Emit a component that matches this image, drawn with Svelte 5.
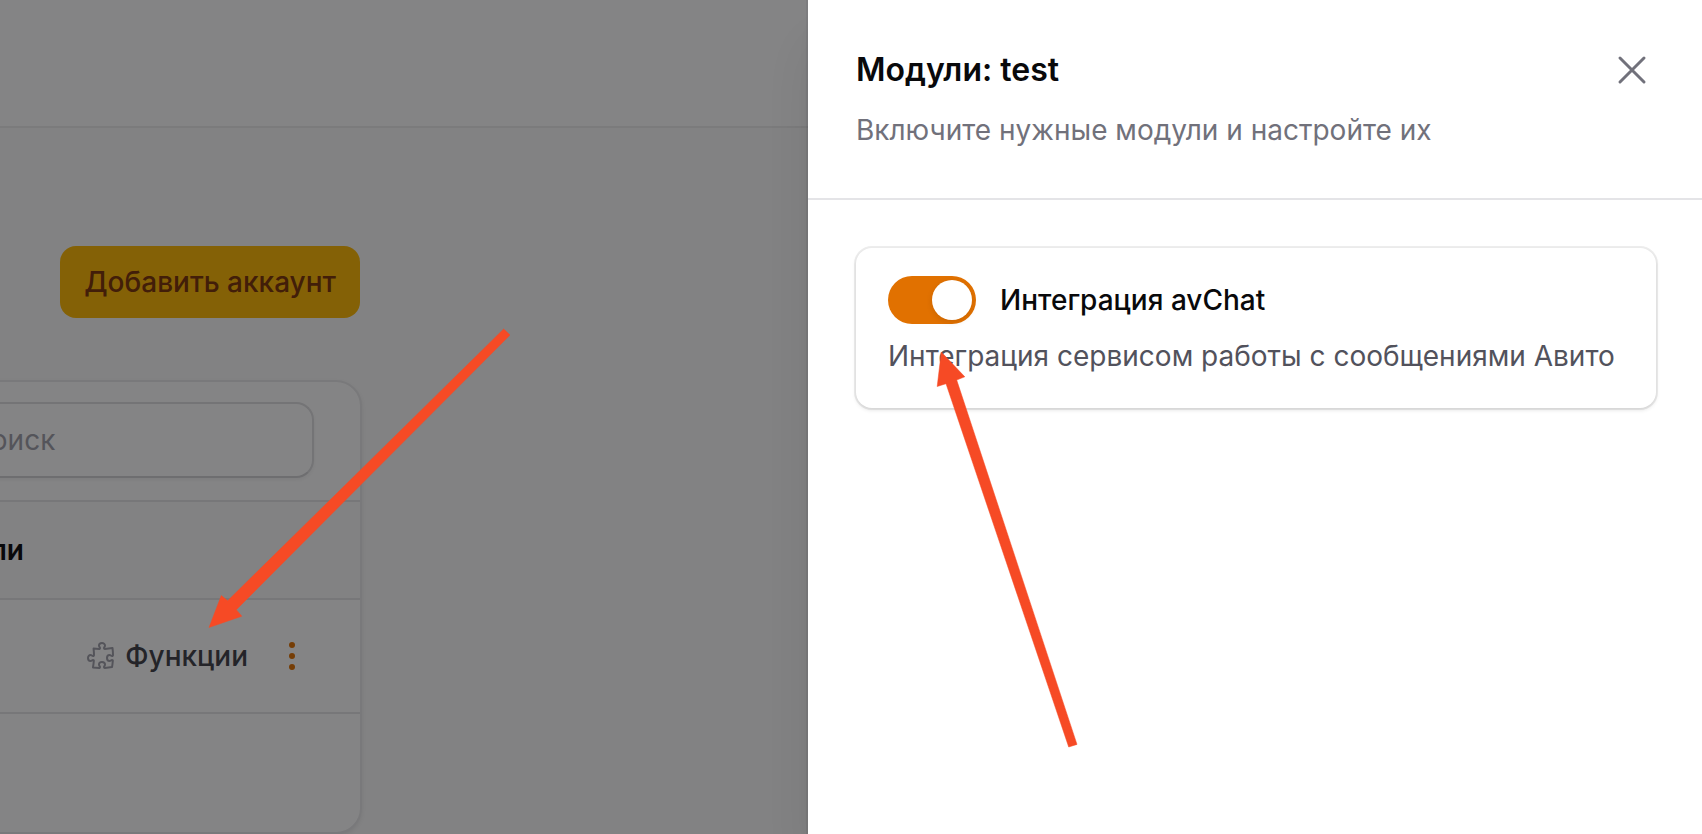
<script>
  let enabled = $state(true);
</script>

<div class="screen">
  <div class="page">
    <header class="topbar"></header>
    <main class="content">
      <div class="actions">
        <button class="primary" type="button">Добавить аккаунт</button>
      </div>
      <section class="table-card">
        <div class="toolbar">
          <input class="search" type="search" placeholder="Поиск" aria-label="Поиск" />
        </div>
        <table>
          <thead>
            <tr>
              <th class="modules" scope="col">Модули</th>
              <td></td>
            </tr>
          </thead>
          <tbody>
            <tr>
              <td></td>
              <td>
                <div class="row-actions">
                  <button class="functions" type="button">
                    <svg class="puzzle" viewBox="0 0 24 24" aria-hidden="true">
                      <path d="M14.25 6.087c0-.355.186-.676.401-.959.221-.29.349-.634.349-1.003 0-1.036-1.007-1.875-2.25-1.875s-2.25.84-2.25 1.875c0 .369.128.713.349 1.003.215.283.401.604.401.959v0a.64.64 0 0 1-.657.643 48.39 48.39 0 0 1-4.163-.3c.186 1.613.293 3.25.315 4.907a.656.656 0 0 1-.658.663v0c-.355 0-.676-.186-.959-.401a1.647 1.647 0 0 0-1.003-.349c-1.036 0-1.875 1.007-1.875 2.25s.84 2.25 1.875 2.25c.369 0 .713-.128 1.003-.349.283-.215.604-.401.959-.401v0c.31 0 .555.26.532.57a48.039 48.039 0 0 1-.642 5.056c1.518.19 3.058.309 4.616.354a.64.64 0 0 0 .657-.643v0c0-.355-.186-.676-.401-.959a1.647 1.647 0 0 1-.349-1.003c0-1.035 1.008-1.875 2.25-1.875 1.243 0 2.25.84 2.25 1.875 0 .369-.128.713-.349 1.003-.215.283-.4.604-.4.959v0c0 .333.277.599.61.58a48.1 48.1 0 0 0 5.427-.63 48.05 48.05 0 0 0 .582-4.717.532.532 0 0 0-.533-.57v0c-.355 0-.676.186-.959.401-.29.221-.634.349-1.003.349-1.035 0-1.875-1.007-1.875-2.25s.84-2.25 1.875-2.25c.37 0 .713.128 1.003.349.283.215.604.401.96.401v0a.656.656 0 0 0 .658-.663 48.422 48.422 0 0 0-.37-5.36c-1.886.342-3.81.574-5.766.689a.578.578 0 0 1-.61-.58v0Z" />
                    </svg>
                    Функции
                  </button>
                  <button class="more" type="button" aria-label="Ещё">
                    <svg viewBox="0 0 20 20" aria-hidden="true">
                      <circle cx="10" cy="4.5" r="1.5" />
                      <circle cx="10" cy="10" r="1.5" />
                      <circle cx="10" cy="15.5" r="1.5" />
                    </svg>
                  </button>
                </div>
              </td>
            </tr>
          </tbody>
        </table>
        <div class="table-footer"></div>
      </section>
    </main>
  </div>

  <div class="backdrop"></div>

  <aside class="drawer" aria-labelledby="drawer-title">
    <header class="drawer-header">
      <div class="heading">
        <h2 id="drawer-title">Модули: test</h2>
        <button class="close" type="button" aria-label="Закрыть">
          <svg viewBox="0 0 24 24" aria-hidden="true"><path d="M6 18 18 6M6 6l12 12" /></svg>
        </button>
      </div>
      <p>Включите нужные модули и настройте их</p>
    </header>
    <div class="drawer-body">
      <section class="module">
        <label class="module-title">
          <input class="toggle" type="checkbox" role="switch" bind:checked={enabled} />
          Интеграция avChat
        </label>
        <p>Интеграция сервисом работы с сообщениями Авито</p>
      </section>
    </div>
  </aside>

  <svg class="arrows" width="1702" height="834" aria-hidden="true">
    <path d="M209 627.5 221.3 595.5 227.7 600.7 503.7 329 510 335 236.3 609.7 241.8 616.2Z" />
    <path d="M941.3 352 937.2 386.5 946 383.7 1068.7 747 1077 744.4 956.7 380 964.8 376.8Z" />
  </svg>
</div>

<style>
  :global(body) {
    margin: 0;
  }

  .screen {
    position: relative;
    min-height: 100vh;
    overflow: hidden;
    background: #fafafa;
    color: #09090b;
    font: 400 28px/40px Inter, "Noto Sans", sans-serif;
  }

  .screen *,
  .screen *::before {
    box-sizing: border-box;
  }

  button {
    margin: 0;
    padding: 0;
    border: 0;
    background: none;
    font: inherit;
    cursor: pointer;
  }

  h2,
  p {
    margin: 0;
  }

  svg {
    display: block;
  }

  .topbar {
    height: 128px;
    background: #fff;
    border-bottom: 2px solid #ececed;
  }

  /* The list is scrolled sideways, so its left part lies past the window edge. */
  .content {
    width: 562px;
    margin-left: -200px;
    padding-top: 118px;
  }

  .actions {
    display: flex;
    justify-content: flex-end;
    padding-right: 2px;
    margin-bottom: 62px;
  }

  .primary {
    padding: 16px 24px;
    border-radius: 16px;
    background: #ffb900;
    color: #7b3306;
    font-weight: 500;
  }

  .table-card {
    border: 2px solid #e9e9ea;
    border-radius: 26px;
    background: #fff;
    background-clip: padding-box;
    box-shadow: 0 2px 4px rgb(0 0 0 / 8%);
    overflow: hidden;
  }

  .toolbar {
    display: flex;
    justify-content: flex-end;
    padding: 20px 46px 22px;
  }

  .search {
    width: 360px;
    height: 76px;
    padding: 0 24px 0 14px;
    border: 2px solid #dedee0;
    border-bottom-color: #d2d2d5;
    border-radius: 18px;
    outline: 0;
    appearance: none;
    background: #fff;
    box-shadow: 0 2px 4px rgb(0 0 0 / 6%);
    font: inherit;
  }

  .search::placeholder {
    color: #9f9fa9;
    opacity: 1;
  }

  table {
    width: 100%;
    border-collapse: separate;
    border-spacing: 0;
  }

  th,
  td {
    padding: 0;
    border-top: 2px solid #e4e4e7;
  }

  thead tr {
    height: 98px;
    background: #fafafa;
  }

  tbody tr {
    height: 114px;
  }

  .modules {
    width: 222px;
    text-align: right;
    font-weight: 600;
  }

  .row-actions {
    display: flex;
    justify-content: flex-end;
    align-items: center;
    gap: 24px;
    padding-right: 48px;
  }

  .functions {
    display: flex;
    align-items: center;
    gap: 8px;
    color: #3f3f46;
    font-weight: 500;
  }

  .puzzle {
    width: 32px;
    height: 32px;
    fill: none;
    stroke: #9f9fa9;
    stroke-width: 1.5;
    stroke-linecap: round;
    stroke-linejoin: round;
  }

  .more svg {
    width: 40px;
    height: 40px;
    fill: #e17100;
  }

  .table-footer {
    height: 120px;
    border-top: 2px solid #e4e4e7;
  }

  .backdrop {
    position: absolute;
    inset: 0;
    background: rgb(9 9 11 / 50%);
  }

  .drawer {
    position: absolute;
    inset: 0 0 0 auto;
    width: 894px;
    max-width: 100%;
    background: #fff;
    box-shadow:
      0 0 0 2px rgb(9 9 11 / 5%),
      0 40px 50px -10px rgb(0 0 0 / 10%),
      0 16px 20px -12px rgb(0 0 0 / 10%);
  }

  .drawer-header {
    padding: 46px 46px 48px 48px;
    border-bottom: 2px solid #e4e4e7;
    color: #71717b;
  }

  .heading {
    display: flex;
    align-items: center;
    justify-content: space-between;
    margin-bottom: 16px;
  }

  h2 {
    color: #09090b;
    font-size: 32px;
    font-weight: 600;
    line-height: 48px;
  }

  .close svg {
    width: 48px;
    height: 48px;
    fill: none;
    stroke: #71717b;
    stroke-width: 1.5;
    stroke-linecap: round;
  }

  .drawer-body {
    padding: 48px 46px 48px 48px;
  }

  .module {
    padding: 28px 32px;
    border-radius: 16px;
    box-shadow:
      0 0 0 2px rgb(9 9 11 / 7%),
      0 2px 4px rgb(0 0 0 / 12%);
    line-height: 48px;
  }

  .module p {
    color: #52525c;
    white-space: nowrap;
  }

  .module-title {
    display: flex;
    align-items: center;
    gap: 24px;
    margin-bottom: 8px;
    font-weight: 500;
  }

  .toggle {
    flex: none;
    width: 88px;
    height: 48px;
    margin: 0;
    padding: 4px;
    border-radius: 24px;
    appearance: none;
    background: #e4e4e7;
    cursor: pointer;
  }

  .toggle::before {
    content: "";
    display: block;
    width: 40px;
    height: 40px;
    border-radius: 50%;
    background: #fff;
    box-shadow: 0 2px 6px rgb(0 0 0 / 10%);
  }

  .toggle:checked {
    background: #e17100;
  }

  .toggle:checked::before {
    margin-left: auto;
  }

  .arrows {
    position: absolute;
    top: 0;
    left: 0;
    fill: #f64a25;
    stroke: #f64a25;
    stroke-width: 0.5;
    stroke-linejoin: round;
    pointer-events: none;
  }
</style>
